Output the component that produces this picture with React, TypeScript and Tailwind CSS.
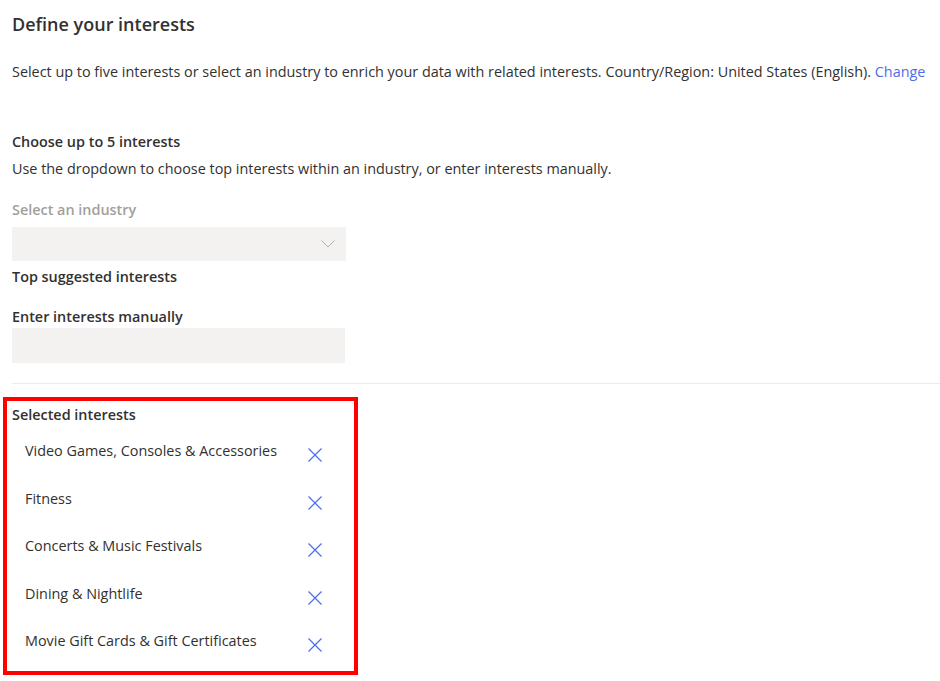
const selected = [
  "Video Games, Consoles & Accessories",
  "Fitness",
  "Concerts & Music Festivals",
  "Dining & Nightlife",
  "Movie Gift Cards & Gift Certificates",
];

function CloseIcon() {
  return (
    <svg width="14" height="14" viewBox="0 0 14 14" fill="none" stroke="currentColor" strokeWidth="1.2">
      <path d="M0.5 0.5L13.5 13.5M13.5 0.5L0.5 13.5" />
    </svg>
  );
}

function Chevron() {
  return (
    <svg width="14" height="8" viewBox="0 0 14 8" fill="none" stroke="currentColor" strokeWidth="1">
      <path d="M0.5 0.5L7 7L13.5 0.5" />
    </svg>
  );
}

export default function App() {
  return (
    <div
      className="min-h-screen bg-white px-3 pt-[11px] text-[14.4px] text-[#323130]"
      style={{ fontFamily: '"Open Sans", "Noto Sans", sans-serif' }}
    >
      <h1 className="h-[28px] text-[18px] font-semibold leading-[26px]">Define your interests</h1>

      <p className="mt-[23px] whitespace-nowrap leading-5">
        Select up to five interests or select an industry to enrich your data with related interests. Country/Region: United
        States (English). <a className="text-[#4f6bed]">Change</a>
      </p>

      <h2 className="mt-[50px] font-semibold leading-5">Choose up to 5 interests</h2>
      <p className="mt-[7px] leading-5">
        Use the dropdown to choose top interests within an industry, or enter interests manually.
      </p>

      <label className="mt-[21px] block font-semibold leading-5 text-[#a19f9d]">Select an industry</label>
      <div className="mt-[7px] flex h-[34px] w-[334px] items-center justify-end bg-[#f3f2f1] pr-[11px] text-[#b3b0ad]">
        <Chevron />
      </div>

      <h3 className="mt-[6px] font-semibold leading-5">Top suggested interests</h3>

      <h3 className="mt-5 font-semibold leading-5">Enter interests manually</h3>
      <div className="mt-px h-[35px] w-[333px] bg-[#f3f2f1]" />

      <div className="-mr-3 mt-[20px] h-px bg-[#edebe9]" />

      <section className="-ml-[9px] mt-[13px] w-[355px] border-4 border-[#ff0000] pb-[19px] pl-[5px] pt-[4px]">
        <h3 className="font-semibold leading-5">Selected interests</h3>
        <ul className="mt-[16px] flex flex-col gap-[26.5px]">
          {selected.map((item) => (
            <li key={item} className="flex items-start pl-[13px]">
              <span className="w-[283px] leading-5">{item}</span>
              <button className="mt-[7px] flex text-[#4f6bed]" aria-label={`Remove ${item}`}>
                <CloseIcon />
              </button>
            </li>
          ))}
        </ul>
      </section>
    </div>
  );
}
